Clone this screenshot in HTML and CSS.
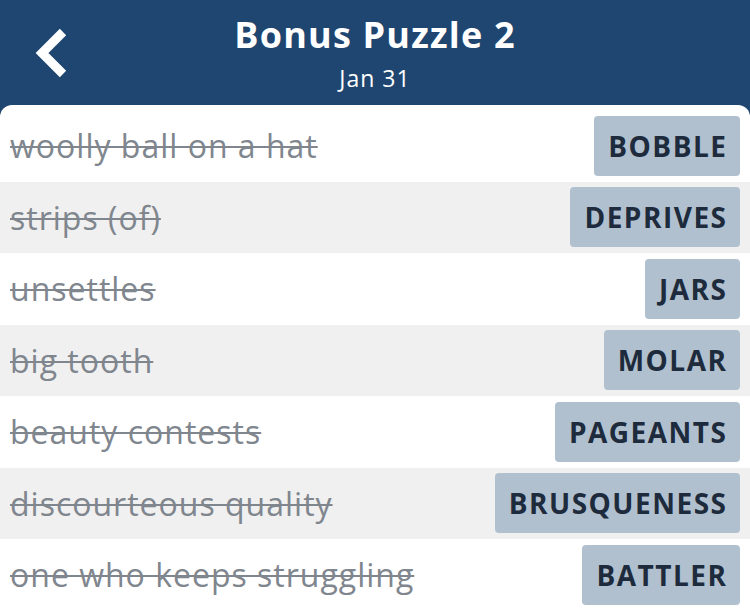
FILE: index.html
```html
<!DOCTYPE html>
<html>
<head>
<meta charset="utf-8">
<title>Bonus Puzzle 2</title>
<link rel="stylesheet" href="styles.css">
</head>
<body>
<div class="header">
	<a class="back" href="#">
		<svg width="40" height="60" viewBox="0 0 40 60">
			<polyline points="30,7 9,28 30,49" fill="none" stroke="#fff" stroke-width="9" stroke-linejoin="miter"/>
		</svg>
	</a>
	<div class="title">
		<h1>Bonus Puzzle 2</h1>
		<div class="date">Jan 31</div>
	</div>
</div>

<ul class="clues">
	<li><span class="clue">woolly ball on a hat</span><span class="answer">BOBBLE</span></li>
	<li><span class="clue">strips (of)</span><span class="answer">DEPRIVES</span></li>
	<li><span class="clue">unsettles</span><span class="answer">JARS</span></li>
	<li><span class="clue">big tooth</span><span class="answer">MOLAR</span></li>
	<li><span class="clue">beauty contests</span><span class="answer">PAGEANTS</span></li>
	<li><span class="clue">discourteous quality</span><span class="answer">BRUSQUENESS</span></li>
	<li><span class="clue">one who keeps struggling</span><span class="answer">BATTLER</span></li>
</ul>
</body>
</html>
```

FILE: styles.css
```css
body {
margin:0;
background:#1f4670;
font-family:"Open Sans", "Noto Sans", sans-serif;
overflow:hidden;
}
.header {
height:105px;
position:relative;
display:flex;
justify-content:center;
color:#fff;
}
.header .back {
position:absolute;
left:33px;
top:25px;
display:block;
}
.header .back svg {
display:block;
}
.title {
text-align:center;
padding-top:13px;
}
.title h1 {
margin:0;
font-size:36px;
font-weight:bold;
letter-spacing:1.2px;
line-height:44px;
}
.title .date {
font-size:23px;
letter-spacing:1px;
line-height:28px;
margin-top:7px;
}
.clues {
list-style:none;
margin:0;
padding:5px 0 0 0;
background:#fff;
border-radius:12px 12px 0 0;
}
.clues li {
height:71.5px;
display:flex;
align-items:center;
justify-content:space-between;
padding:0 10px;
}
.clues li:nth-child(even) {
background:#f0f0f0;
}
.clue {
font-size:32px;
letter-spacing:1px;
color:#80868e;
text-decoration:line-through;
text-decoration-thickness:2px;
}
.answer {
height:60px;
line-height:60px;
padding:0 12.5px 0 14px;
background:#b0c0cf;
border-radius:4px;
font-size:28px;
font-weight:bold;
letter-spacing:1.5px;
color:#1d2b3c;
}
```
